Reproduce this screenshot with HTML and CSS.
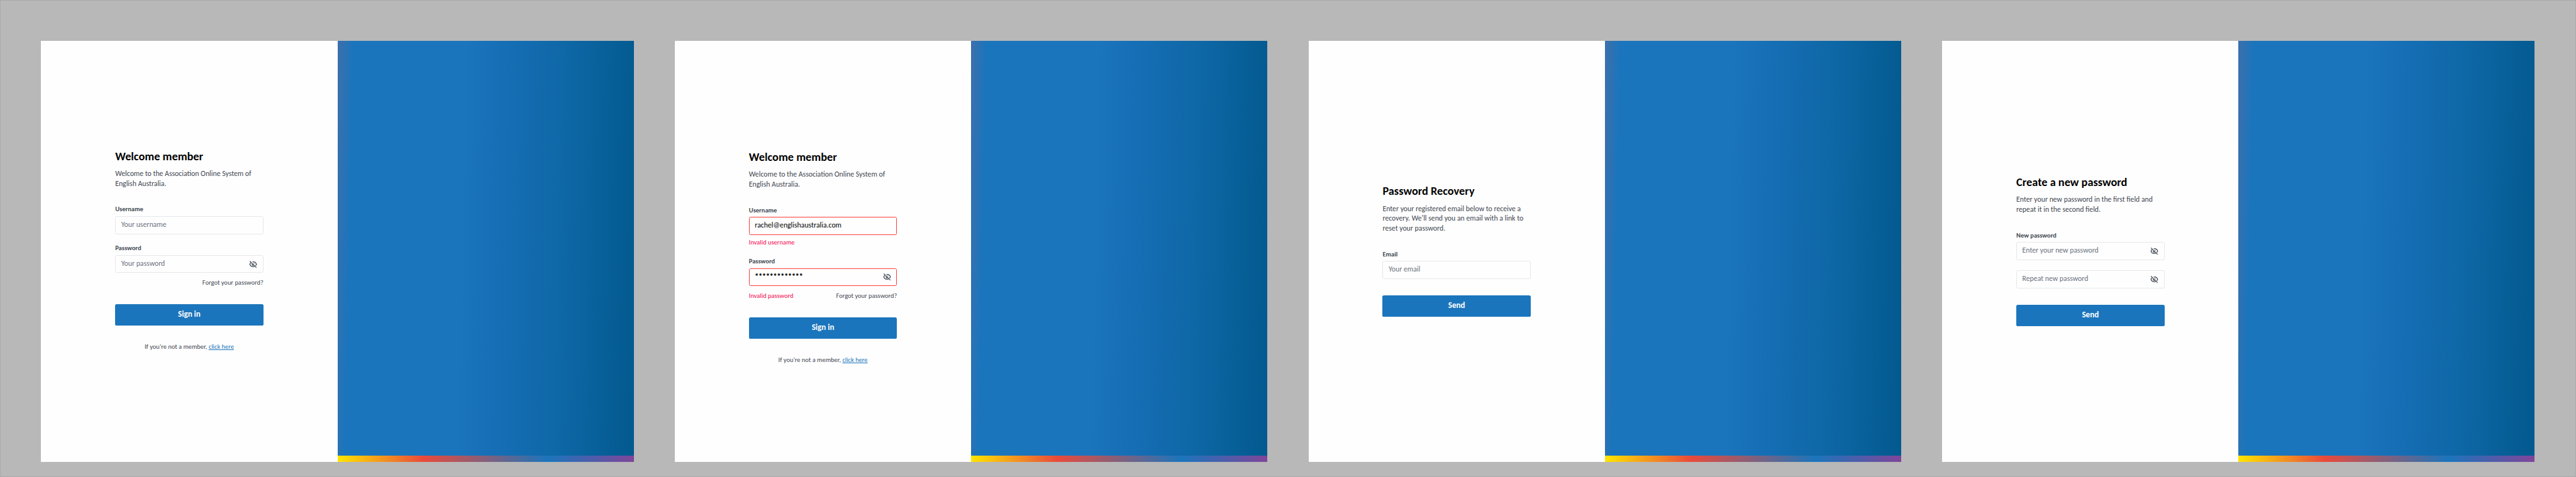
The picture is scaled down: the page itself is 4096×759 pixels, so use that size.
FILE: index.html
```html
<!DOCTYPE html>
<html lang="en">
<head>
<meta charset="utf-8">
<title>English Australia – Sign in</title>
<link rel="stylesheet" href="styles.css">
</head>
<body>
<svg class="sprite" aria-hidden="true">
  <symbol id="eye-off" viewBox="0 0 20 20">
    <g fill="none" stroke="currentColor" stroke-width="1.9">
      <path d="M8.600 4.100C9 4 9.500 4 10 4c3.800 0 6.800 2.300 8.100 6-.5 1.400-1.200 2.500-2.200 3.500"/>
      <path d="M4.800 5.700C3.500 6.700 2.500 8.200 1.900 10c1.300 3.700 4.300 6 8.100 6 1.500 0 2.900-.4 4.100-1"/>
      <path d="M1.900 2.100 18 18.200"/>
    </g>
    <path fill="currentColor" d="M6.900 8.300a3.700 3.700 0 0 0 4.900 4.900z"/>
    <path fill="none" stroke="currentColor" stroke-width="1.200" d="M10.600 7.100a3 3 0 0 1 2.300 2.300"/>
  </symbol>
</svg>
<main class="board">
  <section class="screen">
    <div class="pane">
      <form class="form">
        <h1 class="title">Welcome member</h1>
        <p class="intro">Welcome to the Association Online System of English Australia.</p>
        <div class="field">
          <label class="label">Username</label>
          <div class="input">Your username</div>
        </div>
        <div class="field">
          <label class="label">Password</label>
          <div class="input">Your password<svg class="eye"><use href="#eye-off"/></svg></div>
        </div>
        <div class="hints"><span class="forgot">Forgot your password?</span></div>
        <div class="button">Sign in</div>
        <p class="footer">If you’re not a member, <a class="link">click here</a></p>
      </form>
    </div>
    <div class="art"><div class="rainbow"></div></div>
  </section>

  <section class="screen">
    <div class="pane pane-lowered">
      <form class="form">
        <h1 class="title">Welcome member</h1>
        <p class="intro">Welcome to the Association Online System of English Australia.</p>
        <div class="field">
          <label class="label">Username</label>
          <div class="input invalid">rachel@englishaustralia.com</div>
          <p class="error">Invalid username</p>
        </div>
        <div class="field">
          <label class="label">Password</label>
          <div class="input invalid"><span class="dots">*************</span><svg class="eye"><use href="#eye-off"/></svg></div>
        </div>
        <div class="hints"><span class="alert">Invalid password</span><span class="forgot">Forgot your password?</span></div>
        <div class="button">Sign in</div>
        <p class="footer">If you’re not a member, <a class="link">click here</a></p>
      </form>
    </div>
    <div class="art"><div class="rainbow"></div></div>
  </section>

  <section class="screen">
    <div class="pane">
      <form class="form">
        <h1 class="title">Password Recovery</h1>
        <p class="intro">Enter your registered email below to receive a recovery. We'll send you an email with a link to reset your password.</p>
        <div class="field">
          <label class="label">Email</label>
          <div class="input">Your email</div>
        </div>
        <div class="button">Send</div>
      </form>
    </div>
    <div class="art"><div class="rainbow"></div></div>
  </section>

  <section class="screen">
    <div class="pane">
      <form class="form">
        <h1 class="title">Create a new password</h1>
        <p class="intro">Enter your new password in the first field and repeat it in the second field.</p>
        <div class="field">
          <label class="label">New password</label>
          <div class="input">Enter your new password<svg class="eye"><use href="#eye-off"/></svg></div>
        </div>
        <div class="field">
          <div class="input">Repeat new password<svg class="eye"><use href="#eye-off"/></svg></div>
        </div>
        <div class="button">Send</div>
      </form>
    </div>
    <div class="art"><div class="rainbow"></div></div>
  </section>
</main>
</body>
</html>
```
FILE: styles.css
```css
* { box-sizing: border-box; }

html { overflow: hidden; }

body { margin: 0; }

.sprite { display: none; }

.board {
  zoom: 0.65431;
  display: flex;
  gap: 100px;
  width: 6260px;
  height: 1160px;
  padding: 100px;
  padding-bottom: 36px;
  background: #b8b8b8;
  box-shadow: inset 0 0 0 1px #a5a5a5;
  font-family: Carlito, Calibri, Lato, sans-serif;
  color: #3f4751;
}

.screen {
  display: flex;
  flex: none;
  width: 1440px;
  height: 1024px;
}

.pane {
  display: flex;
  align-items: center;
  justify-content: center;
  width: 720px;
  background: #fefefe;
}

.pane-lowered { padding-top: 34px; }

.form { width: 360px; }

.title {
  margin: 0 0 17px;
  font-size: 28px;
  line-height: 26px;
  font-weight: 700;
  color: #000;
}

.intro {
  margin: 0 0 40px;
  font-size: 18px;
  line-height: 24px;
}

.field + .field { margin-top: 24px; }

.label {
  display: block;
  margin-bottom: 7px;
  font-size: 16px;
  line-height: 20px;
  font-weight: 700;
}

.field + .field .label { margin-top: -1px; }

.input {
  display: flex;
  align-items: center;
  justify-content: space-between;
  height: 44px;
  padding: 0 13px;
  border: 1px solid #e5e7eb;
  border-radius: 4px;
  padding-bottom: 2px;
  font-size: 18px;
  line-height: 24px;
  color: #6b7280;
}

.invalid {
  border-color: #ff3b3b;
  color: #000;
}

.dots { -webkit-text-stroke: 0.5px #000; }

.eye {
  width: 20px;
  height: 20px;
  margin-top: 2px;
  color: #3f4751;
}

.error,
.alert { color: #f5054f; }

.error {
  margin: 6px 0 0;
  font-size: 16px;
  line-height: 24px;
}

.hints {
  display: flex;
  margin-top: 12px;
  font-size: 16px;
  line-height: 24px;
}

.forgot { margin-left: auto; }

.button {
  height: 52px;
  margin-top: 40px;
  border-radius: 4px;
  background: #1b75bc;
  font-size: 20px;
  line-height: 50px;
  font-weight: 700;
  text-align: center;
  color: #fff;
}

.footer {
  margin: 39px 0 1px;
  font-size: 16px;
  line-height: 24px;
  text-align: center;
}

.link {
  color: #1b75bc;
  text-decoration: underline;
  text-decoration-thickness: 1px;
  text-underline-offset: 2px;
}

.art {
  display: flex;
  align-items: flex-end;
  width: 720px;
  background: linear-gradient(91.2deg, #3a70ad 0.5%, #1b75bc 5%, #1b75bc 42%, #166eb5 55%, #0e67a5 76%, #035a90 99%);
}

.rainbow {
  width: 100%;
  height: 16px;
  background: linear-gradient(90deg, #ffe600 0%, #e94a3b 29%, #1b75bc 71%, #7f4599 100%);
}
```
